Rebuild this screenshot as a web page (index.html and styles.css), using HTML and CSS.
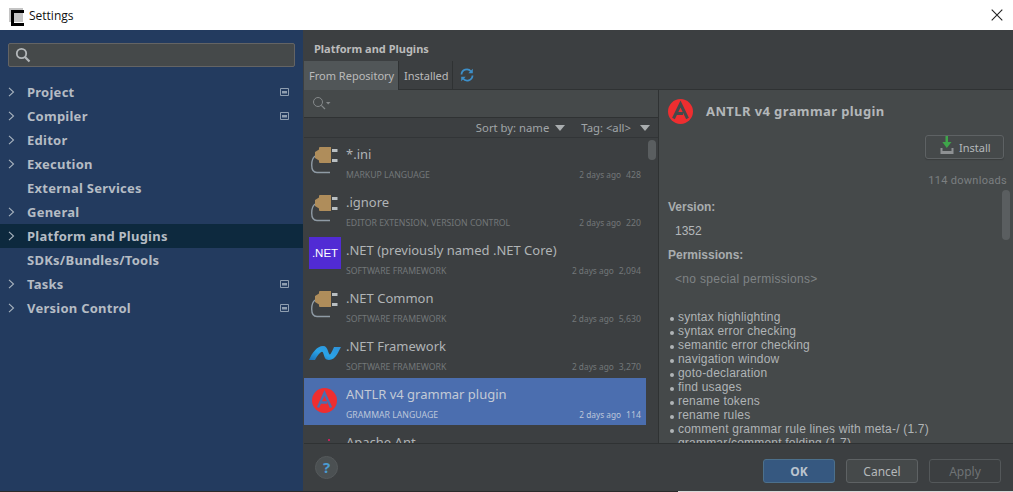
FILE: index.html
```html
<!DOCTYPE html>
<html lang="en">
<head>
<meta charset="utf-8">
<title>Settings</title>
<link rel="stylesheet" href="styles.css">
</head>
<body>
<svg class="defs" width="0" height="0" aria-hidden="true">
  <defs>
    <symbol id="plug" viewBox="0 0 27 27">
      <path d="M4 9C1.500 11 .7 14 .7 18C.7 23 2.500 25.500 6 25.500H19" fill="none" stroke="#8f9ba5" stroke-width="1.400"/>
      <path d="M4 5L8 2.500V1Q8 0 9 0H20V16H9Q8 16 8 15V13.500L4 11Z" fill="#af8d5b"/>
      <path d="M21 2H26.500V5H21ZM21 12H26.500V15H21Z" fill="#b9bfc2"/>
    </symbol>
    <symbol id="chev" viewBox="0 0 7 10"><path d="M1 .8L5.500 5L1 9.200" fill="none" stroke="#a9b4bf" stroke-width="1.100"/></symbol>
    <symbol id="proj" viewBox="0 0 9 8"><path d="M.5.500H8.500V7.500H.5Z" fill="none" stroke="#8f9eb0"/><path d="M2 3H7V5.500H2Z" fill="#8f9eb0"/></symbol>
    <linearGradient id="netg" x1="0" y1="1" x2="1" y2="0">
      <stop offset="0" stop-color="#1a6fb5"/><stop offset=".45" stop-color="#2aa4e8"/><stop offset="1" stop-color="#2f8fd6"/>
    </linearGradient>
  </defs>
</svg>
<div class="window">
  <header class="titlebar">
    <span class="app-icon"></span>
    <span class="title">Settings</span>
    <svg class="close" width="12" height="12" viewBox="0 0 12 12"><path d="M.7.700L11.300 11.300M11.300.700L.7 11.300" stroke="#222" stroke-width="1.100"/></svg>
  </header>
  <div class="body">
    <aside class="sidebar">
      <div class="side-search">
        <svg width="16" height="16" viewBox="0 0 16 16"><circle cx="6.500" cy="6.500" r="4.700" fill="none" stroke="#b4b8ba" stroke-width="1.800"/><path d="M10 10L14.500 14.500" stroke="#b4b8ba" stroke-width="2.200"/></svg>
      </div>
      <nav class="tree">
        <div class="node"><svg class="chev"><use href="#chev"/></svg><span class="label">Project</span><svg class="proj"><use href="#proj"/></svg></div>
        <div class="node"><svg class="chev"><use href="#chev"/></svg><span class="label">Compiler</span><svg class="proj"><use href="#proj"/></svg></div>
        <div class="node"><svg class="chev"><use href="#chev"/></svg><span class="label">Editor</span></div>
        <div class="node"><svg class="chev"><use href="#chev"/></svg><span class="label">Execution</span></div>
        <div class="node leaf"><span class="label">External Services</span></div>
        <div class="node"><svg class="chev"><use href="#chev"/></svg><span class="label">General</span></div>
        <div class="node current"><svg class="chev"><use href="#chev"/></svg><span class="label">Platform and Plugins</span></div>
        <div class="node leaf"><span class="label">SDKs/Bundles/Tools</span></div>
        <div class="node"><svg class="chev"><use href="#chev"/></svg><span class="label">Tasks</span><svg class="proj"><use href="#proj"/></svg></div>
        <div class="node"><svg class="chev"><use href="#chev"/></svg><span class="label">Version Control</span><svg class="proj"><use href="#proj"/></svg></div>
      </nav>
    </aside>
    <main class="main">
      <h1 class="crumb">Platform and Plugins</h1>
      <div class="tabs">
        <span class="tab active">From Repository</span>
        <span class="tab">Installed</span>
        <svg class="refresh" width="14" height="14" viewBox="0 0 14 14"><path d="M1.500 6.500A5.300 5.300 0 0 1 11 3.500M12.500 7.500A5.300 5.300 0 0 1 3 10.500" fill="none" stroke="#3d8fc9" stroke-width="1.800"/><path d="M12.800 .8V5.300H8.300ZM1.200 13.200V8.700H5.700Z" fill="#3d8fc9"/></svg>
      </div>
      <div class="content">
        <section class="repo">
          <div class="filter">
            <svg width="20" height="14" viewBox="0 0 20 14"><circle cx="6" cy="6" r="4.500" fill="none" stroke="#85898b"/><path d="M9.300 9.300L13 13" stroke="#85898b" stroke-width="1.200"/><path d="M14 6H18.500L16.200 8.500Z" fill="#85898b"/></svg>
          </div>
          <div class="sorters">
            <span class="sorter">Sort by: name<i class="caret"></i></span>
            <span class="sorter">Tag: &lt;all&gt;<i class="caret"></i></span>
          </div>
          <div class="list">
            <article class="plugin">
              <div class="pic"><svg class="plug"><use href="#plug"/></svg></div>
              <div class="info"><div class="name">*.ini</div><div class="meta"><span class="cat">MARKUP LANGUAGE</span><span class="date">2 days ago</span><span class="count">428</span></div></div>
            </article>
            <article class="plugin">
              <div class="pic"><svg class="plug"><use href="#plug"/></svg></div>
              <div class="info"><div class="name">.ignore</div><div class="meta"><span class="cat">EDITOR EXTENSION, VERSION CONTROL</span><span class="date">2 days ago</span><span class="count">220</span></div></div>
            </article>
            <article class="plugin">
              <div class="pic"><span class="dotnet">.NET</span></div>
              <div class="info"><div class="name">.NET (previously named .NET Core)</div><div class="meta"><span class="cat">SOFTWARE FRAMEWORK</span><span class="date">2 days ago</span><span class="count">2,094</span></div></div>
            </article>
            <article class="plugin">
              <div class="pic"><svg class="plug"><use href="#plug"/></svg></div>
              <div class="info"><div class="name">.NET Common</div><div class="meta"><span class="cat">SOFTWARE FRAMEWORK</span><span class="date">2 days ago</span><span class="count">5,630</span></div></div>
            </article>
            <article class="plugin">
              <div class="pic"><svg class="netfw" width="32" height="14" viewBox="0 0 32 14"><path d="M0 14C3 7 8 0 14 0C17 0 18 2 19 5C20 8 20.500 9 21.500 8C23 6 24 3 25 1H32C30 4 27 14 20 14C16 14 15.500 11 14.500 8C14 5.500 13 5 11.500 6.500C9 8.500 7 12 6 14Z" fill="url(#netg)"/></svg></div>
              <div class="info"><div class="name">.NET Framework</div><div class="meta"><span class="cat">SOFTWARE FRAMEWORK</span><span class="date">2 days ago</span><span class="count">3,270</span></div></div>
            </article>
            <article class="plugin selected">
              <div class="pic"><svg class="antlr" width="25" height="25" viewBox="0 0 25 25"><circle cx="12.500" cy="12.500" r="12.500" fill="#ee2e30"/><path d="M6 19.500L12.500 5L19 19.500M9 14.500H15" fill="none" stroke="#4b6eaf" stroke-width="2.400"/></svg></div>
              <div class="info"><div class="name">ANTLR v4 grammar plugin</div><div class="meta"><span class="cat">GRAMMAR LANGUAGE</span><span class="date">2 days ago</span><span class="count">114</span></div></div>
            </article>
            <article class="plugin">
              <div class="pic"><span class="ant-dot"></span></div>
              <div class="info"><div class="name">Apache Ant</div></div>
            </article>
            <span class="thumb list-thumb"></span>
          </div>
        </section>
        <section class="detail">
          <div class="detail-head">
            <svg width="25" height="25" viewBox="0 0 25 25"><circle cx="12.500" cy="12.500" r="12.500" fill="#ee2e30"/><path d="M5.500 19.500L12.500 5L19.500 19.500M9 14.500H15" fill="none" stroke="#45494a" stroke-width="3"/></svg>
            <h2>ANTLR v4 grammar plugin</h2>
          </div>
          <div class="install-row">
            <button class="install" type="button">
              <svg width="14" height="18" viewBox="0 0 14 18"><path d="M.5 12H13.500V18H.5ZM2.500 12V15H11.500V12" fill="#8e9193" fill-rule="evenodd"/><path d="M5.500 0H8V6H11.500L6.800 12L2.300 6H5.500Z" fill="#3fa54a"/></svg>
              Install
            </button>
          </div>
          <div class="downloads">114 downloads</div>
          <h3 class="field first">Version:</h3>
          <div class="value">1352</div>
          <h3 class="field">Permissions:</h3>
          <div class="value muted">&lt;no special permissions&gt;</div>
          <ul class="features">
            <li>syntax highlighting</li>
            <li>syntax error checking</li>
            <li>semantic error checking</li>
            <li>navigation window</li>
            <li>goto-declaration</li>
            <li>find usages</li>
            <li>rename tokens</li>
            <li>rename rules</li>
            <li>comment grammar rule lines with meta-/ (1.7)</li>
            <li>grammar/comment folding (1.7)</li>
          </ul>
          <span class="thumb detail-thumb"></span>
        </section>
      </div>
      <footer class="footer">
        <span class="help">?</span>
        <div class="actions">
          <button class="btn ok" type="button">OK</button>
          <button class="btn" type="button">Cancel</button>
          <button class="btn off" type="button">Apply</button>
        </div>
      </footer>
    </main>
  </div>
</div>
</body>
</html>
```
FILE: styles.css
```css
* { box-sizing: border-box; }
html, body { margin: 0; padding: 0; height: 100%; overflow: hidden; background: #fff; }
.defs { position: absolute; }
.window { width: 1013px; height: 492px; display: flex; flex-direction: column; font-family: "Noto Sans", sans-serif; color: #bbb; }

.titlebar { height: 30px; flex: none; background: #fff; display: flex; align-items: center; padding: 0 10px 0 9px; color: #111; }
.app-icon { width: 14px; height: 14px; flex: none; background: #c4c4c4; padding: 2px 2px 2px 2px; display: block; }
.app-icon::before { content: ""; display: block; width: 10px; height: 10px; border: solid #000; border-width: 3px 0 3px 3px; }
.title { margin-left: 6px; font: 12px "Open Sans", sans-serif; }
.close { margin-left: auto; }

.body { flex: 1; display: flex; min-height: 0; background: #3c3f41; border-bottom: 1px solid; border-image: linear-gradient(to right, #2b2b2b 678px, #d9d9d9 678px) 1; }

.sidebar { width: 303px; flex: none; background: #233b5f; padding-top: 13px; }
.side-search { height: 24px; margin: 0 8px; background: #45494a; border: 1px solid #646464; border-radius: 2px; display: flex; align-items: center; padding-left: 6px; }
.tree { margin-top: 13px; }
.node { height: 24px; display: flex; align-items: center; padding: 0 14px 0 8px; font-size: 13px; font-weight: 700; letter-spacing: .25px; color: #b5bcc4; }
.node.current { background: #0d293e; }
.node.leaf { padding-left: 27px; }
.chev { width: 7px; height: 10px; margin-right: 12px; flex: none; }
.label { flex: 1; }
.proj { width: 9px; height: 8px; flex: none; }

.main { flex: 1; display: flex; flex-direction: column; min-width: 0; margin-left: 1px; }
.crumb { margin: 0; height: 31px; padding: 11px 0 0 10px; font-size: 11px; line-height: 16px; font-weight: 700; color: #bbb; }
.tabs { height: 29px; flex: none; display: flex; align-items: center; border-bottom: 1px solid #2f3233; }
.tab { height: 29px; padding: 0 3px 0 5px; display: flex; align-items: center; font-size: 11px; color: #bbb; white-space: nowrap; border-right: 1px solid #2f3233; }
.tab.active { background: #515658; width: 95px; border-right: 1px solid #2f3233; }
.refresh { margin-left: 7px; margin-top: -1px; }

.content { flex: 1; display: flex; min-height: 0; }
.repo { width: 355px; flex: none; display: flex; flex-direction: column; min-height: 0; border-right: 1px solid #2f3233; }
.filter { height: 28px; flex: none; background: #45494a; border-bottom: 1px solid #2f3233; display: flex; align-items: center; padding: 0 0 2px 8px; }
.sorters { height: 20px; flex: none; display: flex; justify-content: flex-end; align-items: center; gap: 16px; padding-right: 8px; border-bottom: 1px solid #323537; font-size: 11.300px; color: #a0a5a8; }
.sorter { display: flex; align-items: center; gap: 6px; }
.sorter + .sorter { gap: 9px; }
.caret { width: 0; height: 0; border: 5px solid transparent; border-top: 6px solid #a9adaf; border-bottom: 0; }
.list { flex: 1; min-height: 0; overflow: hidden; position: relative; }
.plugin { width: 342px; height: 48px; display: flex; }
.plugin.selected { background: #4b6eaf; height: 47px; margin-bottom: 1px; }
.pic { width: 42px; flex: none; display: flex; align-items: flex-start; justify-content: flex-start; }
.plug { width: 27px; height: 27px; margin: 9px 0 0 7px; }
.dotnet { width: 32px; height: 32px; margin: 3px 0 0 5px; background: #512bd4; color: #fff; font: 11.500px/32px "Liberation Sans", sans-serif; text-align: center; }
.netfw { margin: 16px 0 0 5px; }
.antlr { margin: 10px 0 0 8px; }
.info { flex: 1; min-width: 0; padding-right: 5px; padding-top: 6px; }
.name { font-size: 13px; line-height: 20px; color: #b0b4b6; }
.meta { display: flex; align-items: baseline; margin-top: 4px; height: 14px; font-size: 8.700px; line-height: 14px; color: #737779; }
.cat { flex: 1; white-space: nowrap; }
.date { margin-right: 5px; font-size: 8.300px; }
.selected .name { color: #c3cad6; }
.selected .meta { color: #bcc6da; }
.ant-dot { width: 2px; height: 2px; background: #c0245a; margin: 13px 0 0 24px; }
.thumb { position: absolute; width: 8px; background: #5a5e60; border-radius: 4px; }
.list-thumb { right: 2px; top: 2px; height: 20px; }

.detail { flex: 1; min-width: 0; background: #45494a; position: relative; overflow: hidden; padding-left: 9px; font-family: "Liberation Sans", sans-serif; font-size: 12px; color: #b4b8ba; }
.detail-head { display: flex; align-items: center; height: 26px; margin-top: 8px; gap: 13px; }
.detail-head h2 { margin: 0; font: 700 13px "Noto Sans", sans-serif; letter-spacing: .4px; color: #b3b7b9; }
.install-row { display: flex; justify-content: flex-end; padding-right: 9px; margin-top: 11px; }
.install { width: 79px; height: 24px; background: #45494a; border: 1px solid #5e6264; border-radius: 3px; box-shadow: 0 1px 1px #3a3d3e; display: flex; align-items: center; gap: 5px; padding: 0 0 0 14px; font: 11px "Noto Sans", sans-serif; color: #b4b8ba; }
.install svg { margin-top: -5px; }
.downloads { text-align: right; padding-right: 6px; margin-top: 14px; font: 11px/16px "Roboto", sans-serif; letter-spacing: .3px; color: #7b7f81; }
.field { margin: 0; font: 700 12px/16px "Liberation Sans", sans-serif; color: #a9adaf; }
.field.first { margin-top: 10px; }
.value { padding-left: 7px; line-height: 16px; margin: 8px 0; }
.value.muted { color: #7f8385; letter-spacing: .3px; }
.features { list-style: none; margin: 23px 0 0; padding: 0 0 0 2px; }
.features li { line-height: 14px; padding-left: 8px; position: relative; letter-spacing: .2px; color: #b0b4b6; white-space: nowrap; }
.features li::before { content: ""; position: absolute; left: 0; top: 7px; width: 4px; height: 4px; border-radius: 50%; background: #b0b4b6; }
.detail-thumb { right: 3px; top: 100px; height: 50px; }

.footer { height: 48px; flex: none; border-top: 1px solid #2f3233; display: flex; align-items: center; justify-content: space-between; padding: 0 12px 0 11px; }
.help { width: 23px; height: 23px; border-radius: 50%; background: #4b5052; border: 1px solid #55595b; color: #4a9bd1; font: 700 15px/21px "Noto Sans", sans-serif; text-align: center; }
.actions { display: flex; gap: 11px; padding-top: 7px; }
.btn { width: 72px; height: 24px; border: 1px solid #5e6264; border-radius: 3px; background: #45494a; font: 12px "Noto Sans", sans-serif; color: #b4b8ba; padding: 0; }
.btn.ok { background: #365880; border-color: #4c708c; font-weight: 700; color: #bbc4cf; }
.btn.off { background: #3c3f41; border-color: #54585a; color: #6f7375; }
```
